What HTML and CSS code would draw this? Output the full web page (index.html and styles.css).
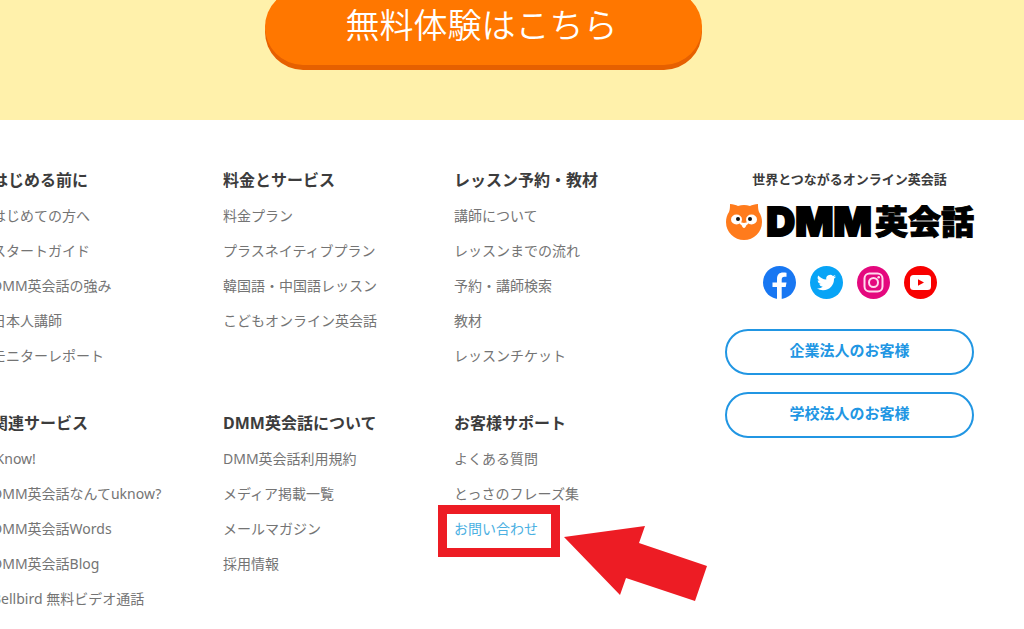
FILE: index.html
```html
<!DOCTYPE html>
<html lang="ja">
<head>
  <meta charset="UTF-8">
  <meta name="viewport" content="width=device-width, initial-scale=1.0">
  <title>DMM英会話</title>
  <link rel="stylesheet" href="styles.css">
</head>
<body>
  <section class="hero">
    <button type="button" class="trial-btn">無料体験はこちら</button>
  </section>

  <footer class="footer">
    <nav class="sitemap">
      <div class="group">
        <h2>はじめる前に</h2>
        <ul>
          <li><a href="#">はじめての方へ</a></li>
          <li><a href="#">スタートガイド</a></li>
          <li><a href="#">DMM英会話の強み</a></li>
          <li><a href="#">日本人講師</a></li>
          <li><a href="#">モニターレポート</a></li>
        </ul>
      </div>
      <div class="group">
        <h2>料金とサービス</h2>
        <ul>
          <li><a href="#">料金プラン</a></li>
          <li><a href="#">プラスネイティブプラン</a></li>
          <li><a href="#">韓国語・中国語レッスン</a></li>
          <li><a href="#">こどもオンライン英会話</a></li>
        </ul>
      </div>
      <div class="group">
        <h2>レッスン予約・教材</h2>
        <ul>
          <li><a href="#">講師について</a></li>
          <li><a href="#">レッスンまでの流れ</a></li>
          <li><a href="#">予約・講師検索</a></li>
          <li><a href="#">教材</a></li>
          <li><a href="#">レッスンチケット</a></li>
        </ul>
      </div>
      <div class="group">
        <h2>関連サービス</h2>
        <ul>
          <li><a href="#">iKnow!</a></li>
          <li><a href="#">DMM英会話なんてuknow?</a></li>
          <li><a href="#">DMM英会話Words</a></li>
          <li><a href="#">DMM英会話Blog</a></li>
          <li><a href="#">Bellbird 無料ビデオ通話</a></li>
        </ul>
      </div>
      <div class="group">
        <h2>DMM英会話について</h2>
        <ul>
          <li><a href="#">DMM英会話利用規約</a></li>
          <li><a href="#">メディア掲載一覧</a></li>
          <li><a href="#">メールマガジン</a></li>
          <li><a href="#">採用情報</a></li>
        </ul>
      </div>
      <div class="group">
        <h2>お客様サポート</h2>
        <ul>
          <li><a href="#">よくある質問</a></li>
          <li><a href="#">とっさのフレーズ集</a></li>
          <li class="marked">
            <a href="#">お問い合わせ</a>
            <span class="marker"></span>
            <svg class="arrow" viewBox="0 0 144 78" aria-hidden="true">
              <path d="M0 12 L81 1 L75 18 L143 41 L131 76 L62 53 L56 70 Z" fill="#ed1c24"/>
            </svg>
          </li>
        </ul>
      </div>
    </nav>

    <aside class="brand">
      <p class="tagline">世界とつながるオンライン英会話</p>
      <a class="logo" href="#">
        <svg class="owl" viewBox="0 0 38 38" aria-hidden="true">
          <path d="M5 1 C8 1 11 2 13 3 Q19 1 25 3 C27 2 30 1 33 1 C33 4 33 6 34 9 C36 12 37 15 37 19 A18 18 0 0 1 1 19 C1 15 2 12 4 9 C5 6 5 4 5 1 Z" fill="#ff7b1c"/>
          <ellipse cx="11.500" cy="16.500" rx="5.500" ry="5" fill="#fff"/>
          <ellipse cx="26.500" cy="16.500" rx="5.500" ry="5" fill="#fff"/>
          <path d="M14 18 Q17 20 19 20 Q21 20 24 18 L23 21 Q21 22 20.500 24 Q19 26 17.500 24 Q17 22 15 21 Z" fill="#fff"/>
          <circle cx="13" cy="16" r="2" fill="#111"/>
          <circle cx="25" cy="16" r="2" fill="#111"/>
        </svg>
        <span class="logo-dmm">DMM</span>
        <span class="logo-ja">英会話</span>
      </a>

      <div class="social">
        <a href="#" aria-label="Facebook">
          <svg viewBox="0 0 33 33">
            <circle cx="16.500" cy="16.500" r="16.500" fill="#1877f2"/>
            <path d="M14 33 V21 H9.500 V16.500 H14 V13 C14 8.500 16.500 6.500 20 6.500 C21.500 6.500 23 6.700 23.500 6.800 V10.800 H21.500 C19.500 10.800 18.700 12 18.700 13.500 V16.500 H23.500 L22.700 21 H18.700 V33 Z" fill="#fff"/>
          </svg>
        </a>
        <a href="#" aria-label="Twitter">
          <svg viewBox="0 0 33 33">
            <circle cx="16.500" cy="16.500" r="16.500" fill="#08a4f6"/>
            <path transform="translate(7 7) scale(.79)" d="M23.950 4.570a10 10 0 0 1-2.820.770 4.960 4.960 0 0 0 2.160-2.720c-.950.550-2 .950-3.130 1.180a4.920 4.920 0 0 0-8.380 4.480C7.690 8.090 4.070 6.130 1.640 3.160a4.900 4.900 0 0 0 1.520 6.570 4.900 4.900 0 0 1-2.230-.620v.060a4.920 4.920 0 0 0 3.950 4.830 5 5 0 0 1-2.210.080 4.940 4.940 0 0 0 4.600 3.420A9.870 9.870 0 0 1 0 19.540a14 14 0 0 0 7.550 2.210c9.050 0 14-7.500 14-13.980 0-.210 0-.420-.020-.630a9.940 9.940 0 0 0 2.460-2.550z" fill="#fff"/>
          </svg>
        </a>
        <a href="#" aria-label="Instagram">
          <svg viewBox="0 0 33 33">
            <circle cx="16.500" cy="16.500" r="16.500" fill="#e4087e"/>
            <g fill="none" stroke="#ffd9ee" stroke-width="2">
              <rect x="7.500" y="7.500" width="18" height="18" rx="5"/>
              <circle cx="16.500" cy="16.500" r="4.500"/>
            </g>
            <circle cx="21.700" cy="11.300" r="1.300" fill="#ffd9ee"/>
          </svg>
        </a>
        <a href="#" aria-label="YouTube">
          <svg viewBox="0 0 33 33">
            <circle cx="16.500" cy="16.500" r="16.500" fill="#f80000"/>
            <rect x="6" y="9" width="21" height="15" rx="3.500" fill="#fff"/>
            <path d="M14 13.300 L20 16.500 L14 19.700 Z" fill="#f80000"/>
          </svg>
        </a>
      </div>

      <a class="corp-btn" href="#">企業法人のお客様</a>
      <a class="corp-btn" href="#">学校法人のお客様</a>
    </aside>
  </footer>
</body>
</html>
```
FILE: styles.css
```css
:root {
  --text: #3c3c3c;
  --link: #747474;
  --blue: #2196e3;
  --red: #ed1c24;
}

* {
  box-sizing: border-box;
}

body {
  margin: 0;
  overflow: hidden;
  background: #fff;
  color: var(--text);
  font-family: "Noto Sans", "Noto Sans CJK JP", sans-serif;
}

a {
  color: inherit;
  text-decoration: none;
}

.hero {
  display: flex;
  justify-content: center;
  height: 120px;
  padding-right: 57px;
  background: #fff1ab;
}

.trial-btn {
  width: 437px;
  height: 76px;
  margin-top: -11px;
  padding: 0 4px 8px 0;
  border: none;
  border-radius: 38px;
  background: #ff7700;
  box-shadow: 0 5px 0 #e66000;
  color: #fff;
  font-family: inherit;
  font-size: 34px;
  font-weight: 350;
  cursor: pointer;
}

/* the left edge runs a little out of the window */
.footer {
  display: grid;
  grid-template-columns: 1fr 249px;
  margin-left: -8px;
  padding: 43px 50px 0 0;
}

.sitemap {
  display: grid;
  grid-template-columns: repeat(3, 1fr);
  align-items: start;
  row-gap: 33px;
  padding-right: 40px;
}

.group h2 {
  margin: 0;
  font-size: 16px;
  line-height: 35px;
  white-space: nowrap;
}

.group ul {
  margin: 0;
  padding: 0;
  list-style: none;
}

.group li {
  color: var(--link);
  font-size: 14px;
  font-weight: 400;
  line-height: 35px;
  white-space: nowrap;
}

.group .marked {
  position: relative;
  color: #4bb0e2;
}

.marker {
  position: absolute;
  top: -6px;
  left: -16px;
  width: 122px;
  height: 52px;
  border: 9px solid var(--red);
}

.arrow {
  position: absolute;
  top: 14px;
  left: 110px;
  width: 144px;
  height: 78px;
}

.tagline {
  margin: 4px 0 12px;
  font-size: 13px;
  font-weight: 700;
  line-height: 24px;
  text-align: center;
}

.logo {
  display: flex;
  align-items: center;
  justify-content: space-between;
  height: 38px;
  color: #000;
  line-height: 34px;
}

.owl {
  width: 38px;
  height: 38px;
}

.logo-dmm {
  font-family: Inter, sans-serif;
  font-size: 40px;
  font-weight: 900;
  -webkit-text-stroke: 2px #000;
}

.logo-ja {
  height: 38px;
  font-family: "Noto Sans CJK JP", sans-serif;
  font-size: 33px;
  font-weight: 900;
  -webkit-text-stroke: 1px #000;
}

.social {
  display: flex;
  justify-content: center;
  gap: 14px;
  margin: 25px 0 30px;
}

.social svg {
  display: block;
  width: 33px;
  height: 33px;
}

.corp-btn {
  display: block;
  height: 46px;
  margin-bottom: 17px;
  border: 2px solid var(--blue);
  border-radius: 23px;
  color: var(--blue);
  font-size: 15px;
  font-weight: 700;
  line-height: 38px;
  text-align: center;
}
```
